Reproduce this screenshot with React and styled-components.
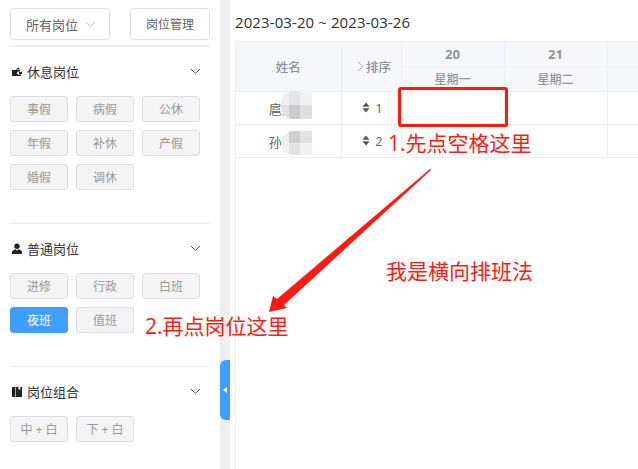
import React from "react";
import styled, { createGlobalStyle } from "styled-components";

const GlobalStyle = createGlobalStyle`
  html, body {
    margin: 0;
    padding: 0;
    background: #fff;
    font-family: "Open Sans", "Noto Sans CJK SC", sans-serif;
  }
  * {
    box-sizing: border-box;
  }
`;

const Page = styled.div`
  position: relative;
  width: 638px;
  height: 469px;
  display: flex;
  overflow: hidden;
`;

const Sidebar = styled.aside`
  width: 220px;
  flex: 0 0 auto;
  padding: 8px 10px 0;
`;

const TopRow = styled.div`
  display: flex;
  justify-content: space-between;
  padding-bottom: 5px;
`;

const SelectBox = styled.div`
  width: 100px;
  height: 32px;
  padding: 0 12px 0 15px;
  display: flex;
  align-items: center;
  justify-content: space-between;
  border: 1px solid #dcdfe6;
  border-radius: 4px;
  font-size: 13px;
  color: #606266;
`;

const ManageButton = styled.div`
  width: 80px;
  height: 32px;
  display: flex;
  align-items: center;
  justify-content: center;
  border: 1px solid #dcdfe6;
  border-radius: 4px;
  font-size: 12px;
  color: #606266;
`;

const Section = styled.section`
  border-top: ${({ $thick }) => ($thick ? "2px" : "1px")} solid #ebeef5;
  padding-bottom: 33px;
`;

const SectionHeader = styled.div`
  height: 49px;
  display: flex;
  align-items: center;
  padding: 0 8px 0 1px;
  font-size: 13px;
  color: #303133;

  & > svg:first-child {
    margin-right: 4px;
  }
  & > span {
    flex: 1;
  }
`;

const TagGrid = styled.div`
  display: grid;
  grid-template-columns: repeat(3, 58px);
  grid-auto-rows: 26px;
  gap: 8px;
`;

const Tag = styled.div`
  display: flex;
  align-items: center;
  justify-content: center;
  border-radius: 3px;
  font-size: 12px;
  border: 1px solid ${({ $active }) => ($active ? "#409eff" : "#dcdfe6")};
  background: ${({ $active }) => ($active ? "#409eff" : "#f4f4f5")};
  color: ${({ $active }) => ($active ? "#fff" : "#999")};
`;

const Gutter = styled.div`
  position: relative;
  width: 10px;
  flex: 0 0 auto;
  background: #eeeeee;
`;

const CollapseHandle = styled.div`
  position: absolute;
  left: 0;
  top: 360px;
  width: 10px;
  height: 60px;
  display: flex;
  align-items: center;
  justify-content: center;
  background: #409eff;
  border-radius: 6px 0 0 6px;

  &::after {
    content: "";
    border-style: solid;
    border-width: 3.5px 4px 3.5px 0;
    border-color: transparent #fff transparent transparent;
  }
`;

const Main = styled.main`
  flex: 1;
  min-width: 0;
  padding-left: 5px;
  display: flex;
  flex-direction: column;
`;

const DateRange = styled.div`
  height: 41px;
  padding-top: 12px;
  font-size: 15px;
  letter-spacing: 0.1px;
  line-height: 20px;
  color: #303133;
`;

const TableWrap = styled.div`
  flex: 1;
  overflow: hidden;
  border-left: 1px solid #ebeef5;
`;

const Table = styled.table`
  width: 474px;
  table-layout: fixed;
  border-collapse: collapse;
  font-size: 13px;
`;

const HeadCell = styled.th`
  height: 25px;
  padding: 0;
  font-weight: ${({ $bold }) => ($bold ? 700 : 500)};
  font-size: ${({ $size }) => $size || 12.5}px;
  color: #909399;
  background: #f5f7fa;
  border: 1px solid #ebeef5;
  border-left: 0;
  text-align: center;
`;

const SortLabel = styled.span`
  display: inline-flex;
  align-items: center;
  gap: 2px;
  padding-left: 6px;
`;

const BodyCell = styled.td`
  height: 33px;
  padding: 0;
  color: #606266;
  border: 1px solid #ebeef5;
  border-left: 0;
  text-align: center;
`;

const SortValue = styled.span`
  display: inline-flex;
  align-items: center;
  gap: 5px;
  padding-left: 3px;
  font-size: 13px;
`;

const Mosaic = styled.div`
  position: absolute;
  left: ${({ $x }) => $x}px;
  top: ${({ $y }) => $y}px;
  display: grid;
  grid-template-columns: 8px 11px 12px;
  grid-auto-rows: ${({ $rowH }) => $rowH}px;
  border-radius: 12px 0 0 12px;
  overflow: hidden;
`;

const MosaicCell = styled.div`
  background: ${({ $c }) => $c};
`;

const Note = styled.div`
  position: absolute;
  left: ${({ $x }) => $x}px;
  top: ${({ $y }) => $y}px;
  font-size: 21px;
  line-height: 28px;
  color: #fd1c14;
  white-space: nowrap;
`;

const RedBox = styled.div`
  position: absolute;
  left: 398px;
  top: 87px;
  width: 110px;
  height: 40px;
  border: 3px solid #fb1b12;
  border-radius: 3px;
`;

const ArrowSvg = styled.svg`
  position: absolute;
  left: 0;
  top: 0;
  pointer-events: none;
`;

const Chevron = ({ color = "#303133" }) => (
  <svg width="13" height="13" viewBox="0 0 13 13" fill="none">
    <path d="M2 4.2 L6.5 8.2 L11 4.2" stroke={color} strokeWidth="1" />
  </svg>
);

const WalletIcon = () => (
  <svg width="12" height="12" viewBox="0 0 12 12" fill="#222">
    <path d="M1 4h8v1.5H7.5a1.5 1.5 0 0 0 0 3H10V10H1z" />
    <path d="M4 3.4 8 1.5l.6 1.9z" />
    <rect x="8" y="6" width="3" height="2" />
  </svg>
);

const PersonIcon = () => (
  <svg width="12" height="12" viewBox="0 0 12 12" fill="#222">
    <circle cx="6" cy="3.3" r="2.7" />
    <path d="M1 11V9.3C1 7.6 2.8 6.6 4.4 6.2L6 7.4l1.6-1.2C9.2 6.6 11 7.6 11 9.3V11z" />
  </svg>
);

const BookIcon = () => (
  <svg width="12" height="12" viewBox="0 0 12 12" fill="#222">
    <rect x="1" y="1" width="3.4" height="10" />
    <path d="M5 1H11v10H5V1zM7.5 1v3l.9-.7.9.7V1z" fillRule="evenodd" />
  </svg>
);

const SortIcon = () => (
  <svg width="8" height="11" viewBox="0 0 8 11" fill="#555">
    <path d="M4 0.5 7.5 4.7H.5z" />
    <path d="M4 10.5 7.5 6.3H.5z" />
  </svg>
);

const groups = [
  { title: "休息岗位", icon: <WalletIcon />, thick: true, tags: ["事假", "病假", "公休", "年假", "补休", "产假", "婚假", "调休"] },
  { title: "普通岗位", icon: <PersonIcon />, tags: ["进修", "行政", "白班", "夜班", "值班"], active: "夜班" },
  { title: "岗位组合", icon: <BookIcon />, tags: ["中 + 白", "下 + 白"] },
];

const rows = [
  { name: "扈某某", order: 1 },
  { name: "孙某某", order: 2 },
];

const blurOne = ["#f0f0f2", "#e6e6e8", "#f1f1f3", "#e2e2e4", "#cbcbcd", "#dfe0e3"];
const blurTwo = ["#eeeeef", "#cfcfd1", "#e2e2e4", "#f0f0f1", "#e4e4e5", "#f0f1f1"];

export default function App() {
  return (
    <Page>
      <GlobalStyle />
      <Sidebar>
        <TopRow>
          <SelectBox>
            所有岗位
            <Chevron color="#c0c4cc" />
          </SelectBox>
          <ManageButton>岗位管理</ManageButton>
        </TopRow>
        {groups.map((g) => (
          <Section key={g.title} $thick={g.thick}>
            <SectionHeader>
              {g.icon}
              <span>{g.title}</span>
              <Chevron color="#44546a" />
            </SectionHeader>
            <TagGrid>
              {g.tags.map((t) => (
                <Tag key={t} $active={t === g.active}>
                  {t}
                </Tag>
              ))}
            </TagGrid>
          </Section>
        ))}
      </Sidebar>
      <Gutter>
        <CollapseHandle />
      </Gutter>
      <Main>
        <DateRange>2023-03-20 ~ 2023-03-26</DateRange>
        <TableWrap>
          <Table>
            <colgroup>
              <col width="105" />
              <col width="60" />
              <col width="103" />
              <col width="103" />
              <col width="103" />
            </colgroup>
            <thead>
              <tr>
                <HeadCell rowSpan={2}>姓名</HeadCell>
                <HeadCell rowSpan={2}>
                  <SortLabel>
                    <svg width="7" height="11" viewBox="0 0 7 11" fill="none">
                      <path d="M1 1l5 4.5L1 10" stroke="#a8abb2" />
                    </svg>
                    排序
                  </SortLabel>
                </HeadCell>
                <HeadCell $size={13} $bold>20</HeadCell>
                <HeadCell $size={13} $bold>21</HeadCell>
                <HeadCell />
              </tr>
              <tr>
                <HeadCell $size={12}>星期一</HeadCell>
                <HeadCell $size={12}>星期二</HeadCell>
                <HeadCell />
              </tr>
            </thead>
            <tbody>
              {rows.map((r) => (
                <tr key={r.name}>
                  <BodyCell>{r.name}</BodyCell>
                  <BodyCell>
                    <SortValue>
                      <SortIcon />
                      {r.order}
                    </SortValue>
                  </BodyCell>
                  <BodyCell />
                  <BodyCell />
                  <BodyCell />
                </tr>
              ))}
            </tbody>
          </Table>
        </TableWrap>
      </Main>

      <Mosaic $x={281} $y={91} $rowH={14}>
        {blurOne.map((c, i) => (
          <MosaicCell key={i} $c={c} />
        ))}
      </Mosaic>
      <Mosaic $x={281} $y={131} $rowH={12}>
        {blurTwo.map((c, i) => (
          <MosaicCell key={i} $c={c} />
        ))}
      </Mosaic>

      <RedBox />
      <Note $x={388} $y={129}>1.先点空格这里</Note>
      <Note $x={386} $y={257}>我是横向排班法</Note>
      <Note $x={145} $y={312}>2.再点岗位这里</Note>
      <ArrowSvg width="638" height="469" viewBox="0 0 638 469">
        <polygon points="431,170 284,305 287,308 269,312 273,296 277,299 430,169" fill="#fb1b12" />
      </ArrowSvg>
    </Page>
  );
}
